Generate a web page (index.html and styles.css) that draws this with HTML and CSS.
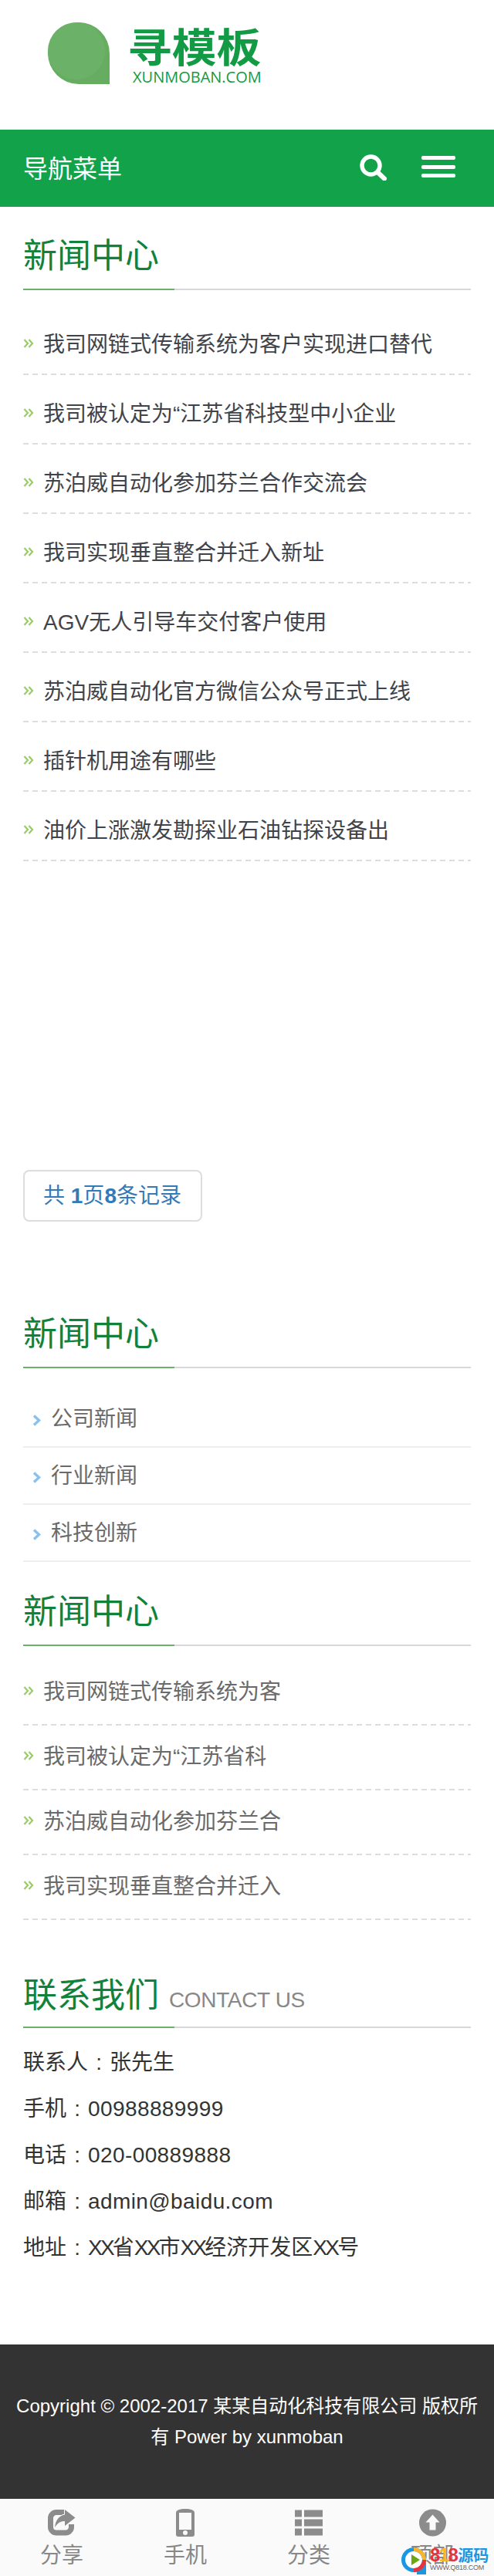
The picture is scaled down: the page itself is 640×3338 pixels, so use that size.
FILE: index.html
```html
<!DOCTYPE html>
<html lang="zh-CN">
<head>
<meta charset="utf-8">
<title>新闻中心</title>
<link rel="stylesheet" href="styles.css">
</head>
<body>
<svg class="defs" width="0" height="0" aria-hidden="true">
  <symbol id="dbl" viewBox="0 0 14 14"><path d="M1.5 2 L6 7 L1.5 12 M7.5 2 L12 7 L7.5 12" fill="none" stroke="currentColor" stroke-width="2.2"/></symbol>
  <symbol id="chev" viewBox="0 0 11 15"><path d="M2 1.5 L8.5 7.5 L2 13.5" fill="none" stroke="currentColor" stroke-width="3.4"/></symbol>
</svg>
<div class="page">
  <header class="logo-bar">
    <div class="drop"><div class="drop-inner"></div></div>
    <div class="brand">
      <div class="brand-cn">寻模板</div>
      <div class="brand-en">XUNMOBAN.COM</div>
    </div>
  </header>

  <nav class="nav">
    <span class="nav-title">导航菜单</span>
    <svg class="ico-search" viewBox="0 0 35 34"><circle cx="14.5" cy="14.5" r="11.5" fill="none" stroke="#fff" stroke-width="5.4"/><path d="M23 23 L32 31.5" stroke="#fff" stroke-width="6" stroke-linecap="round"/></svg>
    <div class="burger"><i></i><i></i><i></i></div>
  </nav>

  <h2 class="heading h-main">新闻中心</h2>
  <div class="rule"></div>
  <ul class="news">
    <li><svg class="dbl"><use href="#dbl"/></svg>我司网链式传输系统为客户实现进口替代</li>
    <li><svg class="dbl"><use href="#dbl"/></svg>我司被认定为“江苏省科技型中小企业</li>
    <li><svg class="dbl"><use href="#dbl"/></svg>苏泊威自动化参加芬兰合作交流会</li>
    <li><svg class="dbl"><use href="#dbl"/></svg>我司实现垂直整合并迁入新址</li>
    <li><svg class="dbl"><use href="#dbl"/></svg>AGV无人引导车交付客户使用</li>
    <li><svg class="dbl"><use href="#dbl"/></svg>苏泊威自动化官方微信公众号正式上线</li>
    <li><svg class="dbl"><use href="#dbl"/></svg>插针机用途有哪些</li>
    <li><svg class="dbl"><use href="#dbl"/></svg>油价上涨激发勘探业石油钻探设备出</li>
  </ul>

  <div class="pager">共 <b>1</b>页<b>8</b>条记录</div>

  <h2 class="heading h-side">新闻中心</h2>
  <div class="rule"></div>
  <ul class="cats">
    <li><svg class="chev"><use href="#chev"/></svg>公司新闻</li>
    <li><svg class="chev"><use href="#chev"/></svg>行业新闻</li>
    <li><svg class="chev"><use href="#chev"/></svg>科技创新</li>
  </ul>

  <h2 class="heading h-recent">新闻中心</h2>
  <div class="rule"></div>
  <ul class="recent">
    <li><svg class="dbl"><use href="#dbl"/></svg>我司网链式传输系统为客</li>
    <li><svg class="dbl"><use href="#dbl"/></svg>我司被认定为“江苏省科</li>
    <li><svg class="dbl"><use href="#dbl"/></svg>苏泊威自动化参加芬兰合</li>
    <li><svg class="dbl"><use href="#dbl"/></svg>我司实现垂直整合并迁入</li>
  </ul>

  <h2 class="heading h-contact">联系我们<small>CONTACT US</small></h2>
  <div class="rule"></div>
  <div class="contact">
    <p>联系人<span class="colon">:</span>张先生</p>
    <p>手机<span class="colon">:</span><span class="val">00988889999</span></p>
    <p>电话<span class="colon">:</span><span class="val">020-00889888</span></p>
    <p>邮箱<span class="colon">:</span><span class="val">admin@baidu.com</span></p>
    <p>地址<span class="colon">:</span><span class="xx">XX</span>省<span class="xx">XX</span>市<span class="xx">XX</span>经济开发区<span class="xx">XX</span>号</p>
  </div>

  <footer class="footer">Copyright © 2002-2017 某某自动化科技有限公司 版权所有 Power by xunmoban</footer>

  <div class="tabbar">
    <div class="tab">
      <svg class="tab-ico" width="36" height="34" viewBox="0 0 36 34"><path d="M23 3.5 H11 A7.5 7.5 0 0 0 3.5 11 V22.5 A7.5 7.5 0 0 0 11 30 H23 A7.5 7.5 0 0 0 30.5 22.5 V19" fill="none" stroke="#8c8c8c" stroke-width="7"/><path d="M22 0 L35.5 10.5 L22 21 V15 C16 15 12.500 17.500 9 23 C10 14 14 8 22 6.500 Z" fill="#8c8c8c" stroke="#fafafa" stroke-width="2" paint-order="stroke"/></svg>
      <span>分享</span>
    </div>
    <div class="tab">
      <svg class="tab-ico" width="24" height="36" viewBox="0 0 24 36"><path d="M12 0 C19 0 24 1.500 24 5 V33 A3 3 0 0 1 21 36 H3 A3 3 0 0 1 0 33 V5 C0 1.500 5 0 12 0 Z" fill="#8c8c8c"/><rect x="4" y="5" width="16" height="22" fill="#fafafa"/><circle cx="12" cy="31" r="3" fill="#fafafa"/></svg>
      <span>手机</span>
    </div>
    <div class="tab">
      <svg class="tab-ico" width="36" height="33" viewBox="0 0 36 33" fill="#8c8c8c"><rect x="0" y="0" width="9" height="9"/><rect x="12" y="0" width="24" height="9"/><rect x="0" y="12" width="9" height="9"/><rect x="12" y="12" width="24" height="9"/><rect x="0" y="24" width="9" height="9"/><rect x="12" y="24" width="24" height="9"/></svg>
      <span>分类</span>
    </div>
    <div class="tab">
      <svg class="tab-ico" width="35" height="35" viewBox="0 0 35 35"><circle cx="17.500" cy="17.500" r="17.500" fill="#8c8c8c"/><path d="M17.500 7 L26.500 17 H21.500 V27 H13.500 V17 H8.500 Z" fill="#fafafa"/></svg>
      <span>顶部</span>
    </div>
    <div class="mark">
      <svg class="mark-ico" width="38" height="38" viewBox="0 0 38 38"><rect x="22" y="22" width="12" height="15" fill="#1b96e0"/><circle cx="18" cy="18" r="13.500" fill="#fff" stroke="#1b96e0" stroke-width="5"/><path d="M18 4.500 A13.500 13.500 0 0 1 31.500 18" fill="none" stroke="#f8b62c" stroke-width="5"/><path d="M31.500 18 A13.500 13.500 0 0 1 18 31.500" fill="none" stroke="#e8323c" stroke-width="5"/><path d="M15 11 L26 18 L15 25 Z" fill="#6aa80f"/></svg>
      <div class="mark-text">
        <div class="mark-top"><span class="m-red">8</span><span class="m-yel">1</span><span class="m-red">8</span><span class="m-blue">源码</span></div>
        <div class="mark-url">WWW.Q818.COM</div>
      </div>
    </div>
  </div>
</div>
</body>
</html>
```

FILE: styles.css
```css
* { box-sizing: border-box; }
html, body { margin: 0; padding: 0; }
body {
  background: #fff;
  color: #333;
  font-family: "Liberation Sans", "Noto Sans CJK SC", sans-serif;
  font-size: 28px;
}
.defs { position: absolute; }
.page { width: 640px; height: 3338px; overflow: hidden; }
ul { list-style: none; margin: 0; padding: 0; }
p { margin: 0; }

/* logo */
.logo-bar { height: 168px; padding: 29px 0 0 62px; display: flex; }
.drop {
  width: 80px; height: 80px;
  background: #66ad62;
  border-radius: 50% 50% 0 50%;
  padding: 0 6px 6px 0;
}
.drop-inner { width: 100%; height: 100%; border-radius: 50%; background: #6cb168; }
.brand { margin-left: 23px; display: flex; flex-direction: column; width: 176px; }
.brand-cn {
  font-size: 52px; font-weight: 700; line-height: 52px; color: #139a44;
  margin-top: 4px; font-family: "Noto Sans CJK SC", sans-serif; white-space: nowrap;
  transform: scaleX(1.11); transform-origin: left center;
}
.brand-en {
  font-family: "Open Sans", sans-serif; font-size: 20px; line-height: 24px;
  color: #139a44; margin: 3px 0 0 7px; white-space: nowrap;
}

/* nav */
.nav { height: 100px; background: #11a24a; display: flex; align-items: center; padding: 0 50px 0 30px; color: #fff; }
.nav-title { font-size: 32px; line-height: 40px; margin-top: 2px; }
.ico-search { width: 35px; height: 34px; margin-left: auto; margin-top: -2px; }
.burger { width: 44px; height: 28px; margin-left: 45px; margin-top: -4px; display: flex; flex-direction: column; justify-content: space-between; }
.burger i { display: block; height: 5px; background: #fff; border-radius: 2px; }

/* section headings */
.heading {
  margin: 0 30px; font-size: 44px; font-weight: 400; line-height: 60px; height: 74px; padding-top: 2px;
  color: #11823b; white-space: nowrap;
}
.heading small { font-size: 28px; color: #888; margin-left: 13px; letter-spacing: -0.35px; }
.h-main { margin-top: 32px; }
.h-side { margin-top: 114px; }
.h-recent { margin-top: 33px; }
.h-contact { margin-top: 64px; padding-top: 4px; }
.rule {
  margin: 0 30px; height: 2px;
  background: linear-gradient(to right, #6cb06c 196px, #d8d8d8 196px);
}

/* lists */
.news, .recent { margin: 20px 30px 0; }
.recent { margin-top: 19px; }
.news li, .recent li {
  display: flex; align-items: center; line-height: 42px; white-space: nowrap;
  background: repeating-linear-gradient(to right, #ddd 0 7px, transparent 7px 12px) bottom / 100% 2px no-repeat;
}
.news li { padding: 30px 0 18px; color: #40444a; }
.recent li { padding: 20px 0 22px; color: #6a6a6a; }
.dbl { width: 14px; height: 14px; margin: -4px 12px 0 0; color: #9c6; flex: none; }

.pager {
  width: 232px; height: 67px; margin: 400px 0 0 30px;
  border: 2px solid #ddd; border-radius: 8px;
  line-height: 63px; padding-left: 24px; color: #337ab7; white-space: nowrap;
}

.cats { margin: 29px 30px 0; color: #6a6a6a; }
.cats li {
  display: flex; align-items: center; height: 74px; line-height: 72px;
  border-bottom: 2px solid #eee; padding: 2px 0 0 12px;
}
.chev { width: 11px; height: 15px; margin: 2px 13px 0 0; color: #8cc0ea; flex: none; }

.contact { margin: 15px 30px 0; }
.contact p { line-height: 60px; height: 60px; white-space: nowrap; }
.colon { display: inline-block; width: 28px; text-align: center; }
.val { letter-spacing: 0.4px; }
.xx { letter-spacing: -2.8px; }

/* footer */
.footer {
  margin-top: 95px; height: 200px; background: #333; color: #fff;
  font-size: 24px; line-height: 40px; text-align: center; padding: 60px 10px;
}

/* tab bar */
.tabbar { position: relative; height: 100px; background: #fafafa; display: grid; grid-template-columns: repeat(4, 160px); }
.tab { height: 100px; display: flex; flex-direction: column; align-items: center; color: #888; }
.tab-ico { height: 36px; margin-top: 13px; flex: none; }
.tab span { line-height: 40px; margin-top: 5px; }
.mark { position: absolute; left: 518px; top: 61px; display: flex; }
.mark-ico { flex: none; }
.mark-text { margin-left: 1px; }
.mark-top { font-size: 24px; font-weight: 700; line-height: 24px; white-space: nowrap; letter-spacing: -1.6px; }
.m-red { color: #e8323c; }
.m-yel { color: #f8b62c; }
.m-blue { color: #1b96e0; font-size: 20px; letter-spacing: 0; margin-left: 1px; font-family: "Noto Sans CJK SC", sans-serif; }
.mark-url { font-size: 9px; line-height: 10px; color: #666; white-space: nowrap; letter-spacing: -0.25px; margin-top: -1px; }
```
